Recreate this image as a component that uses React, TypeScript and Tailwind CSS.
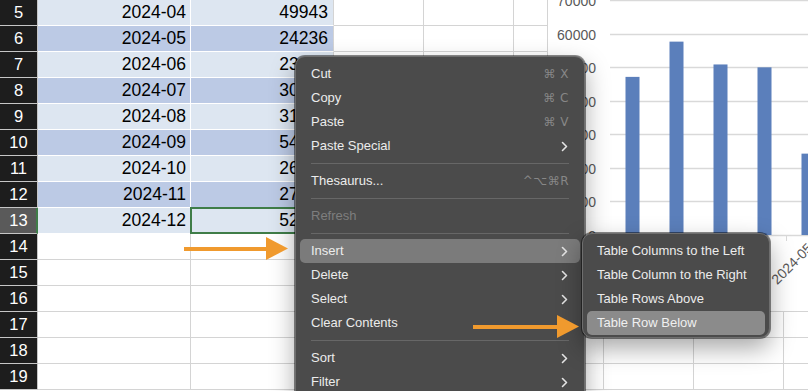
import React from "react";

type RowData = { n: number; d?: string; v?: string };

const rows: RowData[] = [
  { n: 5, d: "2024-04", v: "49943" },
  { n: 6, d: "2024-05", v: "24236" },
  { n: 7, d: "2024-06", v: "23418" },
  { n: 8, d: "2024-07", v: "30572" },
  { n: 9, d: "2024-08", v: "31205" },
  { n: 10, d: "2024-09", v: "54127" },
  { n: 11, d: "2024-10", v: "26789" },
  { n: 12, d: "2024-11", v: "27354" },
  { n: 13, d: "2024-12", v: "52610" },
  { n: 14 },
  { n: 15 },
  { n: 16 },
  { n: 17 },
  { n: 18 },
  { n: 19 },
];

function SheetRow({ r }: { r: RowData }) {
  const inTable = r.n <= 13;
  const dark = inTable && r.n % 2 === 0;
  const selected = r.n === 13;
  const tableBg = dark ? "bg-[#bccae5]" : "bg-[#dde6f1]";
  const cellA = inTable
    ? `${tableBg} border-r border-b border-white`
    : "bg-white border-r border-b border-[#d4d4d4]";
  const cellB = inTable
    ? `${tableBg} border-r border-b border-r-[#d4d4d4] border-b-white`
    : "bg-white border-r border-b border-[#d4d4d4]";
  return (
    <div className="flex h-[26px] shrink-0">
      <div
        className={
          selected
            ? "w-[38px] shrink-0 bg-[#5a5a5a] border-b border-b-[#c6c6c6] border-r-2 border-r-[#3f7d48] flex items-center justify-center text-white text-[16.5px] pl-[1px]"
            : "w-[38px] shrink-0 bg-[#1d1d1d] border-b border-b-[#c6c6c6] border-r border-r-[#c6c6c6] flex items-center justify-center text-white text-[16.5px]"
        }
      >
        {r.n}
      </div>
      <div className={`w-[153px] shrink-0 flex items-center justify-end pr-[4px] text-[17.5px] text-black ${cellA}`}>
        {r.d}
      </div>
      <div className={`relative w-[143px] shrink-0 flex items-center justify-end pr-[5px] text-[17.5px] text-black ${cellB}`}>
        {r.v}
        {selected && (
          <div className="absolute left-[-1px] top-[-1px] right-[-1px] bottom-[-1px] border-2 border-[#3f7d48]" />
        )}
      </div>
      <div className="w-[90px] shrink-0 border-r border-b border-[#d4d4d4]" />
      <div className="w-[90px] shrink-0 border-r border-b border-[#d4d4d4]" />
      <div className="w-[90px] shrink-0 border-r border-b border-[#d4d4d4]" />
      <div className="w-[90px] shrink-0 border-r border-b border-[#d4d4d4]" />
      <div className="w-[90px] shrink-0 border-r border-b border-[#d4d4d4]" />
      <div className="w-[90px] shrink-0 border-r border-b border-[#d4d4d4]" />
    </div>
  );
}

function Chart() {
  const zeroY = 235;
  const per = 235 / 70000;
  const values = [47100, 57600, 50800, 49943, 24236];
  const labels = ["2024-01", "2024-02", "2024-03", "2024-04", "2024-05"];
  const ticks = [0, 10000, 20000, 30000, 40000, 50000, 60000, 70000];
  return (
    <div className="absolute left-[547px] top-0 w-[261px] h-[312px] bg-white">
      <svg width="261" height="312" viewBox="547 0 261 312" className="block">
        <line x1="547.5" y1="0" x2="547.5" y2="311.5" stroke="#d4d4d4" />
        <line x1="547" y1="311.5" x2="808" y2="311.5" stroke="#d4d4d4" />
        {ticks.map((t) => {
          const y = Math.round(zeroY - t * per) + 0.5;
          return (
            <g key={t}>
              <line x1="610" y1={y} x2="808" y2={y} stroke="#d9d9d9" strokeWidth="1.3" />
              <text
                x="596"
                y={y + 5}
                textAnchor="end"
                fontSize="14"
                fill="#595959"
                fontFamily="Liberation Sans, Arial, sans-serif"
              >
                {t}
              </text>
            </g>
          );
        })}
        {[654.5, 698.5, 742.5, 786.5].map((x) => (
          <line key={x} x1={x} y1="235" x2={x} y2="241" stroke="#d9d9d9" />
        ))}
        {values.map((v, i) => {
          const cx = 632.5 + 44 * i;
          const top = zeroY - v * per;
          return <rect key={i} x={cx - 7} y={top} width="14" height={zeroY - top} fill="#5b7fbb" />;
        })}
        {labels.map((l, i) => {
          const cx = 632.5 + 44 * i + 5;
          const y = 249;
          return (
            <text
              key={l}
              x={cx}
              y={y}
              textAnchor="end"
              fontSize="14"
              fill="#595959"
              fontFamily="Liberation Sans, Arial, sans-serif"
              transform={`rotate(-45 ${cx} ${y})`}
            >
              {l}
            </text>
          );
        })}
      </svg>
    </div>
  );
}

function Chevron() {
  return (
    <svg width="7" height="11" viewBox="0 0 7 11" className="mr-[1px]">
      <path d="M1.5 1.5 L5.5 5.5 L1.5 9.5" fill="none" stroke="#e4e4e4" strokeWidth="1.6" strokeLinecap="round" strokeLinejoin="round" />
    </svg>
  );
}

function Item({
  label,
  shortcut,
  sub,
  disabled,
  active,
}: {
  label: string;
  shortcut?: string;
  sub?: boolean;
  disabled?: boolean;
  active?: boolean;
}) {
  return (
    <div
      className={
        active
          ? "flex items-center h-[24px] rounded-[5px] pl-[11px] pr-[11px] bg-[#7b7b7b]"
          : "flex items-center h-[24px] rounded-[5px] pl-[11px] pr-[11px]"
      }
    >
      <span className={disabled ? "text-[#7e7e7e]" : "text-[#ececec]"}>{label}</span>
      <span className="ml-auto flex items-center">
        {shortcut && (
          <span className="text-[#878787] font-['DejaVu_Sans','Liberation_Sans',sans-serif] text-[12px] tracking-[0.5px]">
            {shortcut}
          </span>
        )}
        {sub && <Chevron />}
      </span>
    </div>
  );
}

function Sep() {
  return (
    <div className="h-[11px] flex items-center px-[11px]">
      <div className="h-px w-full bg-[#676767]" />
    </div>
  );
}

function ContextMenu() {
  return (
    <div className="absolute left-[295px] top-[56px] w-[290px] h-[360px] rounded-[10px] bg-[#4b4b4b] border border-[#6e6e6e] shadow-[0_0_0_1px_rgba(0,0,0,0.45),0_10px_24px_rgba(0,0,0,0.35)] px-[4px] pt-[5px] text-[13px] font-['Liberation_Sans',Arial,sans-serif]">
      <Item label="Cut" shortcut="⌘ X" />
      <Item label="Copy" shortcut="⌘ C" />
      <Item label="Paste" shortcut="⌘ V" />
      <Item label="Paste Special" sub />
      <Sep />
      <Item label="Thesaurus..." shortcut="^⌥⌘R" />
      <Sep />
      <Item label="Refresh" disabled />
      <Sep />
      <Item label="Insert" sub active />
      <Item label="Delete" sub />
      <Item label="Select" sub />
      <Item label="Clear Contents" />
      <Sep />
      <Item label="Sort" sub />
      <Item label="Filter" sub />
    </div>
  );
}

function SubMenu() {
  const items = ["Table Columns to the Left", "Table Column to the Right", "Table Rows Above", "Table Row Below"];
  return (
    <div className="absolute left-[582px] top-[233px] w-[188px] h-[105px] rounded-[10px] bg-[#4b4b4b] border border-[#6e6e6e] shadow-[0_0_0_1px_rgba(0,0,0,0.45),0_10px_24px_rgba(0,0,0,0.35)] px-[4px] pt-[5px] text-[13px] font-['Liberation_Sans',Arial,sans-serif]">
      {items.map((t, i) => (
        <div
          key={t}
          className={
            i === 3
              ? "flex items-center h-[24px] rounded-[5px] pl-[10px] bg-[#8b8b8b] text-[#f0f0f0]"
              : "flex items-center h-[24px] rounded-[5px] pl-[10px] text-[#ececec]"
          }
        >
          {t}
        </div>
      ))}
    </div>
  );
}

export default function App() {
  return (
    <div className="relative w-[808px] h-[391px] overflow-hidden bg-white font-['Liberation_Sans',Arial,sans-serif]">
      <div className="flex flex-col">
        {rows.map((r) => (
          <SheetRow key={r.n} r={r} />
        ))}
      </div>
      <Chart />
      <ContextMenu />
      <SubMenu />
      <svg width="106" height="24" viewBox="0 0 106 24" className="absolute left-[184px] top-[237px]">
        <rect x="0" y="10" width="85" height="4" fill="#f09a2e" />
        <polygon points="82,0 104,11.5 82,23" fill="#f09a2e" />
      </svg>
      <svg width="106" height="24" viewBox="0 0 106 24" className="absolute left-[473px] top-[315px]">
        <rect x="0" y="10" width="85" height="4" fill="#f09a2e" />
        <polygon points="84,0 106,11.5 84,23" fill="#f09a2e" />
      </svg>
    </div>
  );
}
